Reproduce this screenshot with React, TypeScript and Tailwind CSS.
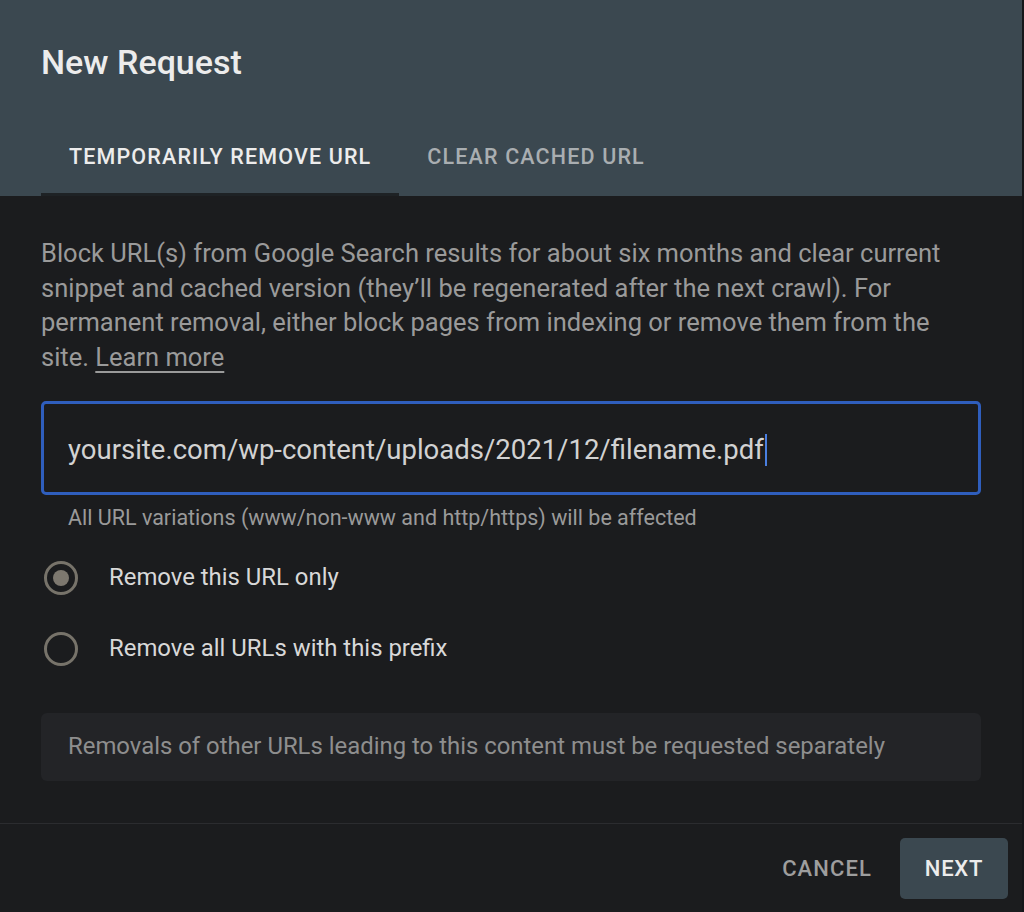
import React, { useState } from 'react'

const FONT = { fontFamily: 'Roboto, "Noto Sans", Arial, sans-serif' }

function Radio({ checked }: { checked: boolean }) {
  return (
    <span className="flex h-[34px] w-[34px] shrink-0 items-center justify-center rounded-full border-[3px] border-[#77736a]">
      {checked && <span className="h-[16px] w-[16px] rounded-full bg-[#7d786f]" />}
    </span>
  )
}

export default function App() {
  const [tab, setTab] = useState(0)
  const [mode, setMode] = useState<'url' | 'prefix'>('url')

  const tabs = ['Temporarily remove URL', 'Clear cached URL']

  return (
    <div style={FONT} className="flex h-[912px] w-[1024px] flex-col overflow-hidden border-r-2 border-[#15171a] bg-[#1b1c1e]">
      {/* Header */}
      <div className="h-[196px] shrink-0 bg-[#3b4850] pl-[41px]">
        <h1 className="pt-[42px] text-[34px] font-medium leading-[40px] text-[#ececec]">New Request</h1>
        <div className="mt-[34px] flex">
          {tabs.map((t, i) => (
            <button
              key={t}
              onClick={() => setTab(i)}
              className={
                'flex h-[80px] flex-col justify-end px-[28px] text-[21.5px] font-medium uppercase tracking-[1.15px] ' +
                (i === tab ? 'text-[#ececec]' : 'text-[#a9aeb1]')
              }
            >
              <span className="flex h-[77px] items-center pt-[4px] leading-[26px]">{t}</span>
              <span className={'-mx-[28px] h-[3px] ' + (i === tab ? 'bg-[#1e2225]' : 'bg-transparent')} />
            </button>
          ))}
        </div>
      </div>

      {/* Body */}
      <div className="flex-1 px-[41px] pt-[40px]">
        <p className="w-[905px] text-[25.5px] leading-[34.5px] text-[#9a9a9a]">
          Block URL(s) from Google Search results for about six months and clear current snippet and cached version
          (they’ll be regenerated after the next crawl). For permanent removal, either block pages from indexing or
          remove them from the site. <span className="underline underline-offset-[5px]">Learn more</span>
        </p>

        <div className="mt-[27px] flex h-[94px] items-center rounded-[5px] border-[3px] border-[#2f5ebd] px-[24px] pt-[3px]">
          <span className="text-[27.5px] text-[#d2d2d2]">yoursite.com/wp-content/uploads/2021/12/filename.pdf</span>
          <span className="ml-[1px] h-[32px] w-[2px] bg-[#4a7fe0]" />
        </div>
        <p className="mt-[9px] pl-[27px] text-[21.5px] leading-[28px] text-[#9a9a9a]">
          All URL variations (www/non-www and http/https) will be affected
        </p>

        <div className="mt-[10px]">
          <label onClick={() => setMode('url')} className="flex h-[71px] cursor-pointer items-center gap-[31px] pl-[3px]">
            <Radio checked={mode === 'url'} />
            <span className="text-[23.9px] text-[#d8d8d8]">Remove this URL only</span>
          </label>
          <label onClick={() => setMode('prefix')} className="flex h-[71px] cursor-pointer items-center gap-[31px] pl-[3px]">
            <Radio checked={mode === 'prefix'} />
            <span className="text-[23.9px] text-[#d8d8d8]">Remove all URLs with this prefix</span>
          </label>
        </div>

        <div className="mt-[29px] flex h-[68px] items-center rounded-[6px] bg-[#232427] px-[27px]">
          <span className="text-[23.9px] text-[#8e8e8e]">Removals of other URLs leading to this content must be requested separately</span>
        </div>
      </div>

      {/* Footer */}
      <div className="flex h-[89px] shrink-0 items-start justify-end gap-[8px] border-t border-[#2b2c2f] pr-[14px] pt-[14px]">
        <button className="flex h-[61px] items-center px-[20px] text-[22px] font-medium uppercase tracking-[1.1px] text-[#9e9e9e]">Cancel</button>
        <button className="flex h-[61px] w-[108px] items-center justify-center rounded-[5px] bg-[#3b4850] text-[22px] font-medium uppercase tracking-[0.8px] text-[#ececec]">
          Next
        </button>
      </div>
    </div>
  )
}
